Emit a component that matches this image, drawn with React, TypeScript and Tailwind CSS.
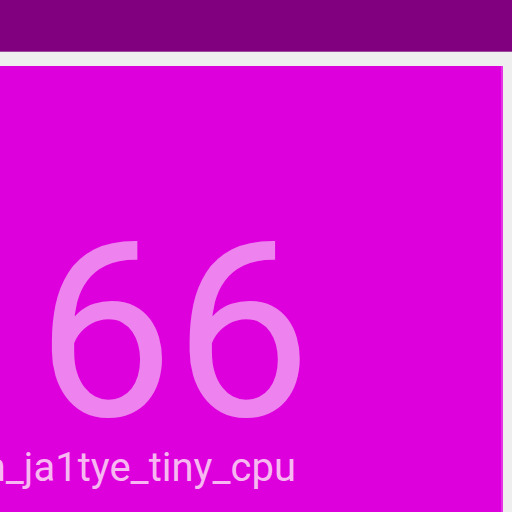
export default function App() {
  return (
    <div className="w-[512px] h-[512px] overflow-hidden bg-[#eeeeee] flex flex-col">
      <div className="h-[52px] shrink-0 bg-[#800080] border-b border-[#9a4a9a]" />
      <div className="flex-1 pt-[14px] pr-[9px] flex flex-col">
        <div className="flex-1 bg-[#dd00dd] border-r-2 border-[#e633e6] flex flex-col relative overflow-hidden">
          <div
            className="pl-[36px] mt-[144px] text-[245px] leading-[1] text-[#ee82ee]"
            style={{ fontFamily: 'Roboto, sans-serif' }}
          >
            66
          </div>
          <div className="flex justify-end w-[296px] -mt-[7px]">
            <span
              className="whitespace-nowrap text-[40px] leading-[1] text-[#f7b8f2]"
              style={{ fontFamily: 'Roboto, sans-serif' }}
            >
              n_ja1tye_tiny_cpu
            </span>
          </div>
        </div>
      </div>
    </div>
  );
}
